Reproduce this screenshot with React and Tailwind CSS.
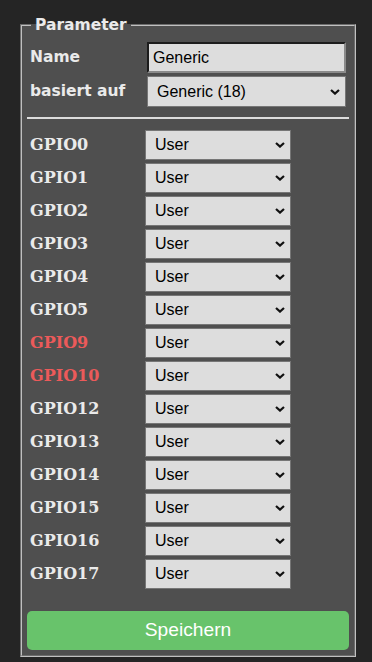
import React from 'react';

// GPIO-Liste, rot markierte Pins sind "gefährlich" (Flash-Pins)
const gpios = [
  { name: 'GPIO0' },
  { name: 'GPIO1' },
  { name: 'GPIO2' },
  { name: 'GPIO3' },
  { name: 'GPIO4' },
  { name: 'GPIO5' },
  { name: 'GPIO9', warn: true },
  { name: 'GPIO10', warn: true },
  { name: 'GPIO12' },
  { name: 'GPIO13' },
  { name: 'GPIO14' },
  { name: 'GPIO15' },
  { name: 'GPIO16' },
  { name: 'GPIO17' },
];

const Chevron = () => (
  <svg
    className="pointer-events-none absolute right-[6px] top-1/2 -translate-y-1/2"
    width="10"
    height="6"
    viewBox="0 0 10 6"
  >
    <path d="M1 1 L5 4.6 L9 1" fill="none" stroke="#111" strokeWidth="2.2" />
  </svg>
);

const Select = ({ value, className = '' }) => (
  <div className={`relative ${className}`}>
    <select
      defaultValue={value}
      className="h-full w-full appearance-none border border-[#767676] bg-[#dddddd] pl-[9px] text-[16px] text-black outline-none [font-family:'Liberation_Sans',Arial,sans-serif]"
    >
      <option>{value}</option>
    </select>
    <Chevron />
  </div>
);

export default function App() {
  return (
    <div className="min-h-[662px] bg-[#252525] pl-[20px] pt-[16px]">
      <fieldset className="w-[336px] border-2 border-[#c0c0c0] bg-[#4f4f4f] px-[5px] pb-[5px] [border-style:groove]">
        <legend className="ml-[4px] px-[4px] text-[15.5px] font-bold leading-[18px] text-[#eaeaea] [font-family:'DejaVu_Sans',Verdana,sans-serif]">
          Parameter
        </legend>

        {/* Name / Vorlage */}
        <div className="mt-[8px] flex flex-col gap-[3px]">
          <div className="flex h-[31px] items-center">
            <span className="w-[120px] pl-[3px] text-[15.5px] font-bold text-[#eaeaea] [font-family:'DejaVu_Sans',Verdana,sans-serif]">
              Name
            </span>
            <input
              defaultValue="Generic"
              className="h-full w-[199px] border-2 border-b-[#8a8a8a] border-l-[#1c1c1c] border-r-[#8a8a8a] border-t-[#1c1c1c] bg-[#dddddd] px-[4px] text-[16px] text-black outline-none [font-family:'Liberation_Sans',Arial,sans-serif]"
            />
          </div>
          <div className="flex h-[31px] items-center">
            <span className="w-[120px] pl-[3px] text-[15.5px] font-bold text-[#eaeaea] [font-family:'DejaVu_Sans',Verdana,sans-serif]">
              basiert auf
            </span>
            <Select value="Generic (18)" className="h-full w-[199px]" />
          </div>
        </div>

        <div className="mt-[10px] h-[2px] bg-[#dcdcdc]" />

        {/* GPIO Zuordnung */}
        <div className="mt-[11px] flex flex-col gap-[3px]">
          {gpios.map((g) => (
            <div key={g.name} className="flex h-[30px] items-center">
              <span
                className={`w-[118px] pl-[3px] text-[16px] font-bold [font-family:'DejaVu_Serif',serif] ${
                  g.warn ? 'text-[#ec5a5a]' : 'text-[#eaeaea]'
                }`}
              >
                {g.name}
              </span>
              <Select value="User" className="h-full w-[146px]" />
            </div>
          ))}
        </div>

        <button className="mt-[22px] h-[39px] w-full rounded-[5px] bg-[#68c36b] text-[19.2px] text-white [font-family:'Liberation_Sans',Arial,sans-serif]">
          Speichern
        </button>
      </fieldset>
    </div>
  );
}
